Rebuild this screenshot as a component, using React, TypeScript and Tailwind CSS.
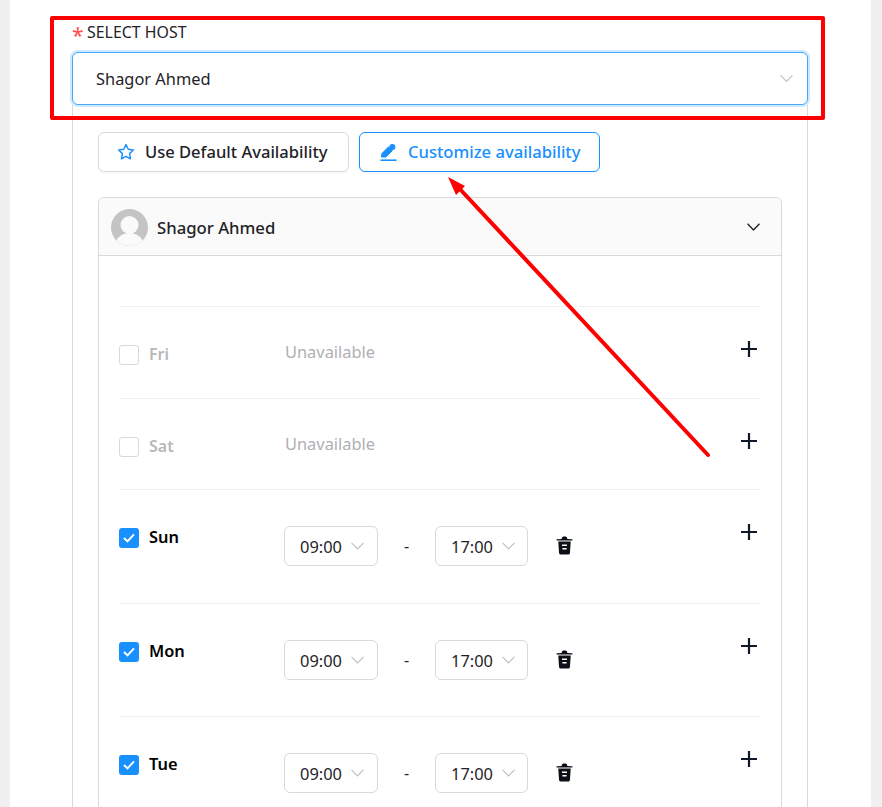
import React from "react";

const font = { fontFamily: '"Noto Sans", sans-serif' };

function Chevron({ className, sw = 1.2 }: { className: string; sw?: number }) {
  return (
    <svg viewBox="0 0 14 8" fill="none" stroke="currentColor" strokeWidth={sw} className={className}>
      <path d="M0.6 0.6 L7 7.2 L13.4 0.6" />
    </svg>
  );
}

function TimeSelect({ value, w }: { value: string; w: string }) {
  return (
    <div className={`flex h-10 items-center rounded-md border border-[#d9d9d9] bg-white pl-[15px] text-[16.4px] text-[#1f2328] ${w}`}>
      <span className="w-[51px] translate-y-[1px]">{value}</span>
      <Chevron className="h-[8px] w-[13px] text-[#bfbfbf]" />
    </div>
  );
}

function Plus() {
  return (
    <svg viewBox="0 0 16 16" className="h-4 w-4 text-[#111827]" fill="none" stroke="currentColor" strokeWidth="2.2">
      <path d="M8 0 V16 M0 8 H16" />
    </svg>
  );
}

function Trash() {
  return (
    <svg viewBox="0 0 18 20" className="h-[19px] w-[17px] text-[#0d1117]" fill="currentColor">
      <path d="M6 3 C6 1 7.2 0.4 9 0.4 C10.8 0.4 12 1 12 3 L17.4 3.4 V4.6 L0.6 4.6 V3.4 Z" />
      <path fillRule="evenodd" d="M2.4 5.8 H15.6 L14.8 17.6 C14.7 19 13.8 19.6 12.6 19.6 H5.4 C4.2 19.6 3.3 19 3.2 17.6 Z M6.4 9 V10.6 H11.6 V9 Z M6.8 12.6 V14.2 H11.2 V12.6 Z" />
    </svg>
  );
}

function OffRow({ day, h }: { day: string; h: string }) {
  return (
    <div className={`flex border-t border-[#f0f0f0] ${h}`}>
      <div className="flex w-[165px] items-start gap-[10px] pt-[38px]">
        <span className="h-5 w-5 rounded-[3px] border border-[#d9d9d9] bg-white" />
        <span className="text-[16px] font-semibold leading-[18px] text-[#b8b8b8]">{day}</span>
      </div>
      <div className="flex-1 pl-[1px] pt-[32px] text-[16.4px] leading-[26px] text-[#b0b0b4]">Unavailable</div>
      <div className="pt-[34px] pr-[4px]"><Plus /></div>
    </div>
  );
}

function OnRow({ day, h }: { day: string; h: string }) {
  return (
    <div className={`flex border-t border-[#f0f0f0] ${h}`}>
      <div className="flex w-[165px] items-start gap-[10px] pt-[38px]">
        <span className="flex h-5 w-5 items-center justify-center rounded-[3px] bg-[#1890ff]">
          <svg viewBox="0 0 12 10" className="h-[10px] w-3" fill="none" stroke="white" strokeWidth="2">
            <path d="M1 5 L4.5 8.4 L11 1.4" />
          </svg>
        </span>
        <span className="text-[16.4px] font-semibold leading-[18px] text-black">{day}</span>
      </div>
      <div className="flex flex-1 items-start pt-[36px]">
        <TimeSelect value="09:00" w="w-[94px]" />
        <span className="flex h-10 w-[57px] items-center justify-center text-[16px] text-[#1f2328]">-</span>
        <TimeSelect value="17:00" w="w-[93px]" />
        <span className="flex h-[38px] items-center pl-[28px]"><Trash /></span>
      </div>
      <div className="pt-[34px] pr-[4px]"><Plus /></div>
    </div>
  );
}

export default function App() {
  return (
    <div style={font} className="relative h-[807px] w-[882px] overflow-hidden bg-[#f0f0f0] px-[10px]">
      <div className="h-full w-[861px] bg-white pl-[62px] pt-[16px]">
        <div className="w-[736px]">
          <div className="flex h-[36px] items-center pb-[2px] text-[15.9px] text-[#1f2328]">
            <span className="mr-[5px] w-[10px] translate-y-[2px] text-center text-[21px] leading-none text-[#ff4d4f]">*</span>SELECT HOST
          </div>
          <div className="flex h-[53px] items-center justify-between rounded-md border border-[#40a9ff] bg-white pl-[23px] pr-[14px] text-[16.4px] text-[#1f2328] shadow-[0_0_0_2px_rgba(24,144,255,0.2)]">
            <span className="translate-y-[1px]">Shagor Ahmed</span>
            <Chevron className="h-[9px] w-[13px] text-[#bfbfbf]" />
          </div>
          <div className="h-[702px] w-[736px] border-x border-[#d9d9d9] px-[25px] pt-[27px]">
            <div className="flex gap-[10px]">
              <div className="flex h-10 w-[251px] items-center gap-[10px] rounded-md border border-[#d9d9d9] bg-white pl-[18px] text-[16.55px] font-medium text-[#1f2328] shadow-[0_2px_0_rgba(0,0,0,0.02)]">
                <svg viewBox="0 0 20 20" className="h-[18px] w-[18px]" fill="none" stroke="#1890ff" strokeWidth="1.6" strokeLinejoin="round">
                  <path d="M10 1.8 L12.5 7 L18.2 7.8 L14 11.8 L15 17.6 L10 14.8 L5 17.6 L6 11.8 L1.8 7.8 L7.5 7 Z" />
                </svg>
                Use Default Availability
              </div>
              <div className="flex h-10 w-[241px] items-center gap-[11px] rounded-md border border-[#1890ff] bg-white pl-[20px] text-[16.6px] font-medium text-[#1890ff] shadow-[0_2px_0_rgba(0,0,0,0.02)]">
                <svg viewBox="0 0 17 17" className="h-[17px] w-[17px]" fill="none">
                  <path d="M1.4 13 L2 9.4 L8.6 2.8 L12.4 6.6 L5.8 13 Z" fill="#1890ff" stroke="#1890ff" strokeLinejoin="round" />
                  <circle cx="12.4" cy="3" r="3" fill="#1890ff" />
                  <rect x="0.5" y="15.4" width="16" height="1.6" fill="#1890ff" />
                </svg>
                Customize availability
              </div>
            </div>
            <div className="mt-[25px] w-[684px] rounded-t-md border border-[#d9d9d9]">
              <div className="flex h-[58px] items-center justify-between rounded-t-md border-b border-[#d9d9d9] bg-[#fafafa] pl-[12px] pr-[21px] pt-[2px]">
                <div className="flex items-center gap-[9px]">
                  <svg viewBox="0 0 37 37" className="h-[37px] w-[37px]">
                    <defs>
                      <clipPath id="av"><circle cx="18.5" cy="18.5" r="18.5" /></clipPath>
                    </defs>
                    <circle cx="18.5" cy="18.5" r="18.5" fill="#c4c4c4" />
                    <g clipPath="url(#av)" fill="#fafafa">
                      <circle cx="18.5" cy="16" r="9" />
                      <ellipse cx="18.5" cy="36" rx="14" ry="12" />
                    </g>
                  </svg>
                  <span className="text-[16.7px] font-medium text-[#1f2328]">Shagor Ahmed</span>
                </div>
                <Chevron className="h-2 w-[13px] -translate-y-[1px] text-[#1f2328]" sw={1.5} />
              </div>
              <div className="px-5 pt-[50px]">
                <OffRow day="Fri" h="h-[92px]" />
                <OffRow day="Sat" h="h-[91px]" />
                <OnRow day="Sun" h="h-[114px]" />
                <OnRow day="Mon" h="h-[113px]" />
                <OnRow day="Tue" h="h-[114px]" />
              </div>
            </div>
          </div>
        </div>
      </div>
      <div className="absolute left-[50px] top-[16px] h-[104px] w-[775px] rounded-[2px] border-4 border-[#ff0000]" />
      <svg viewBox="0 0 882 807" className="absolute left-0 top-0 h-[807px] w-[882px]" fill="none">
        <path d="M708 455 L458 187" stroke="#ff0000" strokeWidth="4" strokeLinecap="round" />
        <polygon points="448,177 465,186 456,195" fill="#ff0000" />
      </svg>
    </div>
  );
}
